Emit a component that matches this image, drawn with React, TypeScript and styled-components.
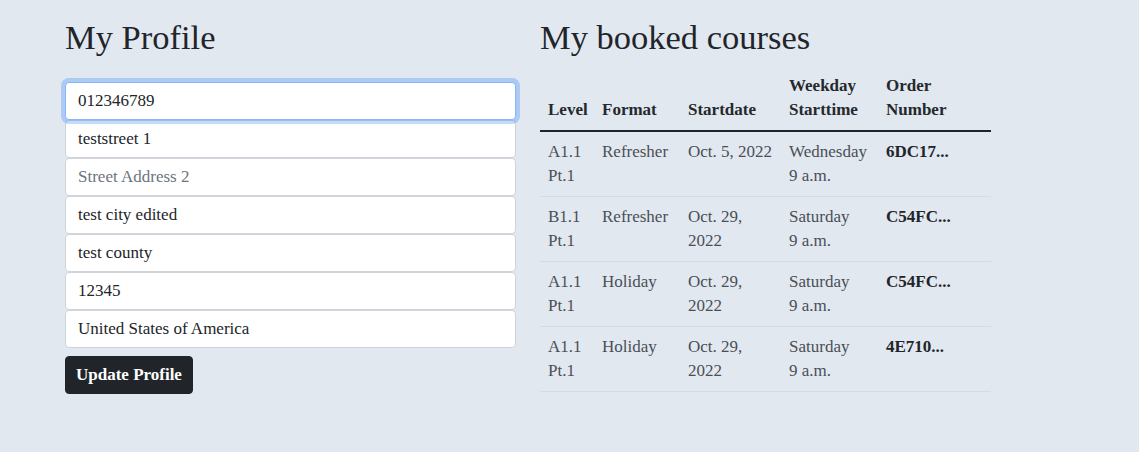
import React from "react";
import styled, { createGlobalStyle } from "styled-components";

const Global = createGlobalStyle`
  html, body { margin: 0; padding: 0; }
  body {
    background: #e2e8f0;
    font-family: "Liberation Serif", "DejaVu Serif", serif;
    font-size: 17px;
    line-height: 24px;
    color: #212529;
  }
`;

const Page = styled.div`
  display: grid;
  grid-template-columns: 451px 451px;
  column-gap: 24px;
  padding: 16px 0 0 65px;
  min-height: 436px;
`;

const Column = styled.section`
  display: flex;
  flex-direction: column;
`;

const Heading = styled.h2<{ $mb: number }>`
  margin: 0 0 ${(p) => p.$mb}px 0;
  font-family: "Liberation Serif", serif;
  font-weight: 400;
  font-size: 34.5px;
  line-height: 42px;
  color: #212529;
`;

const Form = styled.form`
  display: flex;
  flex-direction: column;
`;

const Input = styled.input`
  box-sizing: border-box;
  height: 38px;
  width: 100%;
  padding: 6px 12px;
  font-family: "Liberation Serif", serif;
  font-size: 17px;
  line-height: 24px;
  color: #212529;
  background: #fff;
  border: 1px solid #ced4da;
  border-radius: 4px;
  outline: none;
  &::placeholder { color: #6c757d; }
  &:focus {
    border-color: #86b7fe;
    box-shadow: 0 0 0 4px rgba(13, 110, 253, 0.25);
    position: relative;
    z-index: 1;
  }
`;

const Button = styled.button`
  align-self: flex-start;
  margin-top: 8px;
  height: 38px;
  padding: 6px 10px;
  background: #212529;
  color: #fff;
  border: 1px solid #212529;
  border-radius: 4px;
  font-family: "Liberation Serif", serif;
  font-size: 17px;
  font-weight: 700;
  line-height: 24px;
`;

const Table = styled.table`
  width: 100%;
  table-layout: fixed;
  border-collapse: collapse;
  font-size: 17px;
  line-height: 24px;
`;

const Th = styled.th<{ $w: number }>`
  width: ${(p) => p.$w}px;
  text-align: left;
  vertical-align: bottom;
  padding: 8px;
  font-weight: 700;
  color: #25292e;
  white-space: nowrap;
  border-bottom: 2px solid #212529;
`;

const Td = styled.td<{ $bold?: boolean }>`
  text-align: left;
  vertical-align: top;
  padding: 8px;
  white-space: nowrap;
  font-weight: ${(p) => (p.$bold ? 700 : 400)};
  color: ${(p) => (p.$bold ? "#212529" : "#4a4f56")};
  border-bottom: 1px solid #d5dbe2;
`;

const rows = [
  { level: ["A1.1", "Pt.1"], format: "Refresher", date: ["Oct. 5, 2022"], day: "Wednesday", time: "9 a.m.", order: "6DC17..." },
  { level: ["B1.1", "Pt.1"], format: "Refresher", date: ["Oct. 29,", "2022"], day: "Saturday", time: "9 a.m.", order: "C54FC..." },
  { level: ["A1.1", "Pt.1"], format: "Holiday", date: ["Oct. 29,", "2022"], day: "Saturday", time: "9 a.m.", order: "C54FC..." },
  { level: ["A1.1", "Pt.1"], format: "Holiday", date: ["Oct. 29,", "2022"], day: "Saturday", time: "9 a.m.", order: "4E710..." },
];

export default function App() {
  return (
    <>
      <Global />
      <Page>
        <Column>
          <Heading $mb={24}>My Profile</Heading>
          <Form onSubmit={(e) => e.preventDefault()}>
            <Input defaultValue="012346789" autoFocus />
            <Input defaultValue="teststreet 1" />
            <Input placeholder="Street Address 2" />
            <Input defaultValue="test city edited" />
            <Input defaultValue="test county" />
            <Input defaultValue="12345" />
            <Input defaultValue="United States of America" />
            <Button type="submit">Update Profile</Button>
          </Form>
        </Column>
        <Column>
          <Heading $mb={8}>My booked courses</Heading>
          <Table>
            <thead>
              <tr>
                <Th $w={38}>Level</Th>
                <Th $w={70}>Format</Th>
                <Th $w={85}>Startdate</Th>
                <Th $w={81}>Weekday<br />Starttime</Th>
                <Th $w={97}>Order<br />Number</Th>
              </tr>
            </thead>
            <tbody>
              {rows.map((r, i) => (
                <tr key={i}>
                  <Td>{r.level[0]}<br />{r.level[1]}</Td>
                  <Td>{r.format}</Td>
                  <Td>{r.date.length > 1 ? <>{r.date[0]}<br />{r.date[1]}</> : r.date[0]}</Td>
                  <Td>{r.day}<br />{r.time}</Td>
                  <Td $bold>{r.order}</Td>
                </tr>
              ))}
            </tbody>
          </Table>
        </Column>
      </Page>
    </>
  );
}
